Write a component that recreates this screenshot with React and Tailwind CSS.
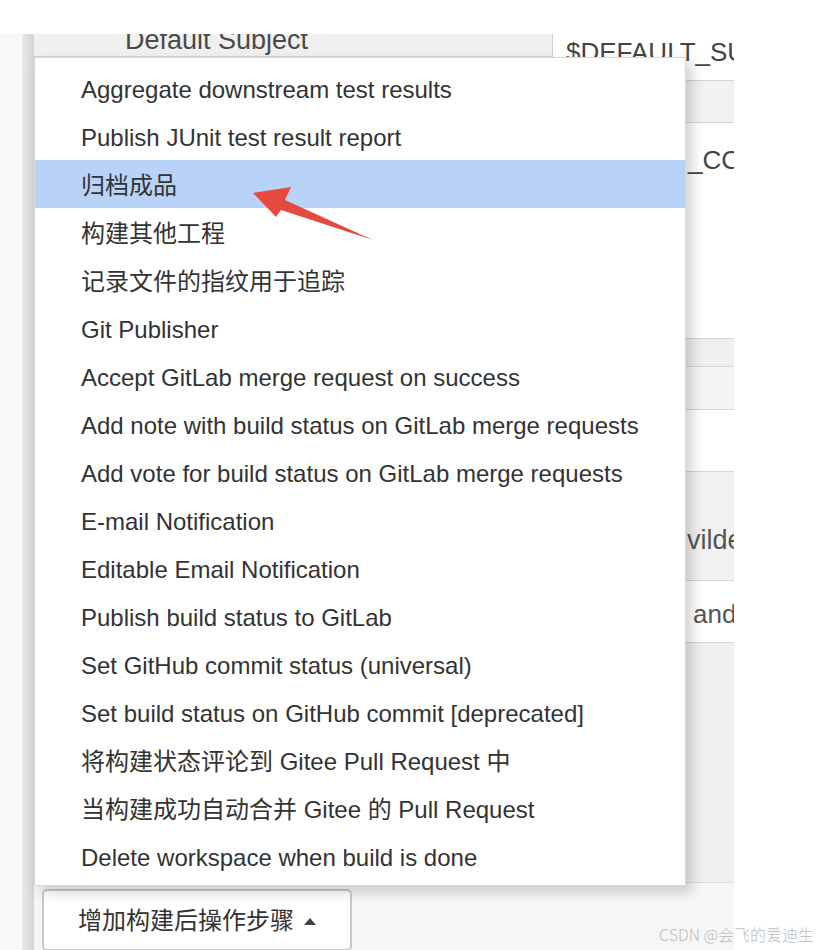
import React from "react";

const items = [
  "Aggregate downstream test results",
  "Publish JUnit test result report",
  "归档成品",
  "构建其他工程",
  "记录文件的指纹用于追踪",
  "Git Publisher",
  "Accept GitLab merge request on success",
  "Add note with build status on GitLab merge requests",
  "Add vote for build status on GitLab merge requests",
  "E-mail Notification",
  "Editable Email Notification",
  "Publish build status to GitLab",
  "Set GitHub commit status (universal)",
  "Set build status on GitHub commit [deprecated]",
  "将构建状态评论到 Gitee Pull Request 中",
  "当构建成功自动合并 Gitee 的 Pull Request",
  "Delete workspace when build is done",
];

const App = () => {
  return (
    <div className="relative w-[818px] h-[950px] bg-white overflow-hidden font-['Liberation_Sans','Noto_Sans_CJK_SC',sans-serif]">
      <div className="h-[34px]" />

      {/* page behind the menu */}
      <div className="flex h-[916px] w-[734px]">
        <div className="w-[22px] bg-[#f8f8f8]" />
        <div className="w-[12px] bg-gradient-to-r from-[#e9e9e9] to-[#d4d4d4]" />
        <div className="flex-1 flex flex-col overflow-hidden bg-white">
          <div className="flex h-[46px] shrink-0">
            <div className="w-[518px] h-[23px] bg-[#f0f0f0] border-b border-[#d4d4d4]">
              <div className="-mt-[7px] pl-[91px] text-[27px] leading-[27px] text-[#4a4a4a] whitespace-nowrap">
                Default Subject
              </div>
            </div>
            <div className="flex-1 border-l border-[#cfcfcf] overflow-hidden">
              <div className="mt-[5px] pl-[13px] text-[26px] leading-[26px] text-[#444] whitespace-nowrap">
                $DEFAULT_SUBJECT
              </div>
            </div>
          </div>
          <div className="h-[43px] shrink-0 bg-[#f2f2f2] border-t border-b border-[#d6d6d6]" />
          <div className="h-[215px] shrink-0 bg-white">
            <div className="mt-[24px] ml-[654px] text-[26px] leading-[26px] text-[#444] whitespace-nowrap">_CC</div>
          </div>
          <div className="h-[28px] shrink-0 bg-[#efefef] border-t border-[#d6d6d6]" />
          <div className="h-[43px] shrink-0 bg-[#f4f4f4] border-t border-[#d6d6d6]" />
          <div className="h-[62px] shrink-0 bg-white border-t border-[#d6d6d6]" />
          <div className="h-[109px] shrink-0 bg-[#f2f2f2] border-t border-[#d6d6d6]">
            <div className="mt-[55px] ml-[653px] text-[27px] leading-[26px] text-[#555] whitespace-nowrap">vilder</div>
          </div>
          <div className="h-[62px] shrink-0 bg-white border-t border-[#d6d6d6]">
            <div className="mt-[20px] ml-[659px] text-[26px] leading-[26px] text-[#555] whitespace-nowrap">and</div>
          </div>
          <div className="h-[240px] shrink-0 bg-[#f0f0f0] border-t border-[#d6d6d6]" />
          <div className="flex-1 bg-[#f6f6f6] border-t border-[#dcdcdc]">
            <button className="mt-[6px] ml-[8px] w-[310px] h-[62px] flex items-center gap-[10px] pl-[34px] pt-[2px] bg-white border-2 border-[#c8c8c8] rounded-[5px] text-[24px] text-[#333]">
              <span>增加构建后操作步骤</span>
              <span className="w-0 h-0 border-l-[6px] border-r-[6px] border-b-[7px] border-l-transparent border-r-transparent border-b-[#444]" />
            </button>
          </div>
        </div>
      </div>

      {/* dropdown menu */}
      <div className="absolute left-[34px] top-[57px] w-[652px] h-[829px] bg-white border border-[#d8d8d8] shadow-[6px_6px_12px_rgba(0,0,0,0.18)] py-[6px]">
        {items.map((t, i) => (
          <div
            key={t}
            className={
              "h-[48px] flex items-center pl-[46px] pt-[4px] text-[24px] text-[#333] whitespace-nowrap " +
              (i === 2 ? "bg-[#b9d3f8]" : "")
            }
          >
            {t}
          </div>
        ))}
      </div>

      {/* red arrow */}
      <svg className="absolute left-0 top-0" width="818" height="950" viewBox="0 0 818 950">
        <polygon
          points="253,193 291,187 285,200 373,240 281,210 276,217"
          fill="#e64a3f"
        />
      </svg>

      <div className="absolute left-[659px] top-[923px] text-[16px] leading-[22px] text-[#bdbdbd] whitespace-nowrap font-['Noto_Sans_CJK_SC',sans-serif] font-light">
        CSDN @会飞的爱迪生
      </div>
    </div>
  );
};

export default App;
